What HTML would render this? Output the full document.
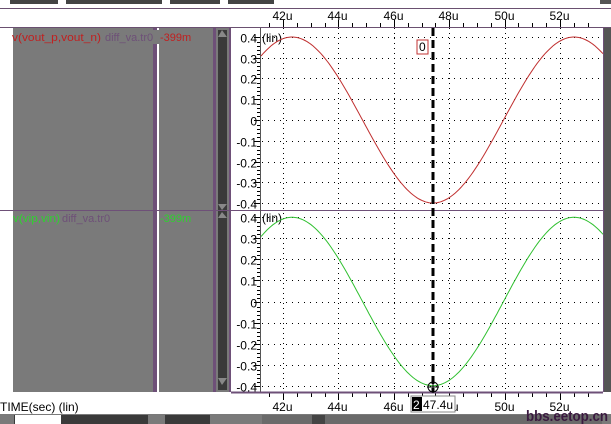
<!DOCTYPE html>
<html><head><style>
body{margin:0;width:611px;height:424px;overflow:hidden;background:#fff;font-family:"Liberation Sans",sans-serif;}
svg{display:block}
text{font-family:"Liberation Sans",sans-serif;font-size:12px}
.lg{font-size:11px}
</style></head><body>
<svg id="s" width="611" height="424" xmlns="http://www.w3.org/2000/svg">
<rect width="611" height="424" fill="#fff"/>
<rect x="10" y="0" width="48" height="4" fill="#444"/>
<rect x="66" y="0" width="96" height="4" fill="#444"/>
<rect x="170" y="0" width="50" height="4" fill="#444"/>
<rect x="228" y="0" width="46" height="4" fill="#444"/>
<rect x="600" y="0" width="11" height="4" fill="#555"/>
<line x1="0" y1="8.5" x2="611" y2="8.5" stroke="#6a5070"/>
<line x1="0" y1="27.5" x2="611" y2="27.5" stroke="#6a5070"/>
<rect x="13" y="28" width="140" height="364" fill="#7a7a7a"/>
<rect x="153" y="28" width="4" height="364" fill="#6e5078"/>
<rect x="157" y="28" width="2" height="364" fill="#fff"/>
<rect x="159" y="28" width="54" height="364" fill="#7a7a7a"/>
<rect x="213" y="28" width="3" height="364" fill="#6e5078"/>
<rect x="216" y="28" width="13" height="364" fill="#7a7a7a"/>
<rect x="218" y="30" width="9" height="360" fill="#3a3a3a"/>
<polygon points="222,30 218,37 227,37" fill="#888"/>
<polygon points="222,385 218,378 227,378" fill="#888"/>
<polygon points="218,204 227,204 222,210" fill="#888"/>
<polygon points="218,218 227,218 222,212" fill="#888"/>
<rect x="229" y="28" width="2" height="364" fill="#6e5078"/>
<line x1="0" y1="210.5" x2="611" y2="210.5" stroke="#6e5078"/>
<text class="lg" x="12" y="41" fill="#c02020" textLength="89" lengthAdjust="spacingAndGlyphs">v(vout_p,vout_n)</text>
<text class="lg" x="105" y="41" fill="#6e5078">diff_va.tr0</text>
<rect x="153" y="30" width="6" height="14" fill="#7a7a7a"/>
<text class="lg" x="160" y="41" fill="#c02020">-399m</text>
<text class="lg" x="13" y="222" fill="#30d030" textLength="47" lengthAdjust="spacingAndGlyphs">v(vip,vin)</text>
<text class="lg" x="62" y="222" fill="#6e5078">diff_va.tr0</text>
<text class="lg" x="160" y="222" fill="#30d030">-399m</text>
<rect x="603" y="28" width="8" height="364" fill="#555"/>
<line x1="603.5" y1="28" x2="603.5" y2="392" stroke="#6e5078"/>
<g id="grid"></g>
<line x1="260.5" y1="28" x2="260.5" y2="392" stroke="#555"/>
<line x1="231" y1="392.5" x2="603" y2="392.5" stroke="#6e5078" stroke-width="2"/>
<g id="lab" fill="#000"></g>
<text x="262" y="42" fill="#000">(lin)</text>
<text x="262" y="222" fill="#000">(lin)</text>
<path id="p1" fill="none" stroke="#c03030" stroke-width="1"/>
<path id="p2" fill="none" stroke="#30c030" stroke-width="1"/>
<line x1="433" y1="28" x2="433" y2="392" stroke="#000" stroke-width="3" stroke-dasharray="8,4"/>
<rect x="417" y="40" width="11" height="14" fill="#fff" stroke="#c03030"/>
<text x="419" y="51" fill="#000">0</text>
<circle cx="433" cy="387" r="5" fill="none" stroke="#000"/>
<line x1="427" y1="387" x2="439" y2="387" stroke="#000"/>
<line x1="433" y1="381" x2="433" y2="393" stroke="#000"/>
<text x="0" y="411" fill="#000">TIME(sec) (lin)</text>
<rect x="411" y="396" width="44" height="16" fill="#fff" stroke="#888"/>
<rect x="412" y="397" width="10" height="14" fill="#000"/>
<text x="413" y="409" fill="#fff">2</text>
<text x="423" y="409" fill="#000">47.4u</text>
<rect x="0" y="414" width="611" height="10" fill="#7a7a7a"/>
<rect x="14" y="415" width="134" height="9" fill="#3a3a3a"/>
<rect x="15" y="415" width="46" height="9" fill="#fff"/>
<rect x="165" y="415" width="45" height="9" fill="#3a3a3a"/>
<rect x="262" y="415" width="340" height="9" fill="#6a6a6a"/>
<rect x="312" y="415" width="13" height="9" fill="#444"/>
<text x="526" y="421" fill="#3a1a40" style="font-size:15px;font-weight:bold" textLength="82" lengthAdjust="spacingAndGlyphs">bbs.eetop.cn</text>
</svg>
<script>
var NS="http://www.w3.org/2000/svg";
function el(t,a,p){var e=document.createElementNS(NS,t);for(var k in a)e.setAttribute(k,a[k]);p.appendChild(e);return e;}
var g=document.getElementById('grid'),lab=document.getElementById('lab');
function xu(u){return 283+(u-42)*27.7;}
for(var u=42;u<=52;u+=2){var x=Math.round(xu(u))+.5;
 el('line',{x1:x,y1:28,x2:x,y2:392,stroke:'#000','stroke-dasharray':'1,4'},g);
 el('text',{x:x-11,y:20},lab).textContent=u+'u';
 el('text',{x:x-11,y:411},lab).textContent=u+'u';}
for(var u=40;u<=54;u+=0.5){var x=Math.round(xu(u))+.5;if(x<262||x>602)continue;var L=(u%2==0)?7:4;
 el('line',{x1:x,y1:27,x2:x,y2:27-L,stroke:'#000'},g);el('line',{x1:x,y1:393,x2:x,y2:393+L,stroke:'#000'},g);}
function panel(c,s){for(var v=-4;v<=4;v++){var y=Math.round(c-v*s)+.5;
 el('line',{x1:262,y1:y,x2:603,y2:y,stroke:'#000','stroke-dasharray':'1,5'},g);
 el('line',{x1:254,y1:y,x2:260,y2:y,stroke:'#000'},g);
 var t=(v==0)?'0':(v<0?'-':'')+'0.'+Math.abs(v);
 el('text',{x:257,y:y+5,'text-anchor':'end'},lab).textContent=t;
 for(var k=1;k<5;k++){var yy=Math.round(y-k*s/5)+.5;if(v<4)el('line',{x1:257,y1:yy,x2:260,y2:yy,stroke:'#000'},g);}}}
panel(120,20.8);panel(301.5,21.1);
function curve(id,c,s){var d='';for(var x=261;x<=603;x+=2){var v=-0.399*Math.cos(Math.PI*(x-433)/141);
 d+=(d?'L':'M')+x+','+(c-v*s*10).toFixed(1);}document.getElementById(id).setAttribute('d',d);}
curve('p1',120,20.8);curve('p2',301.5,21.1);
</script>
</body></html>
